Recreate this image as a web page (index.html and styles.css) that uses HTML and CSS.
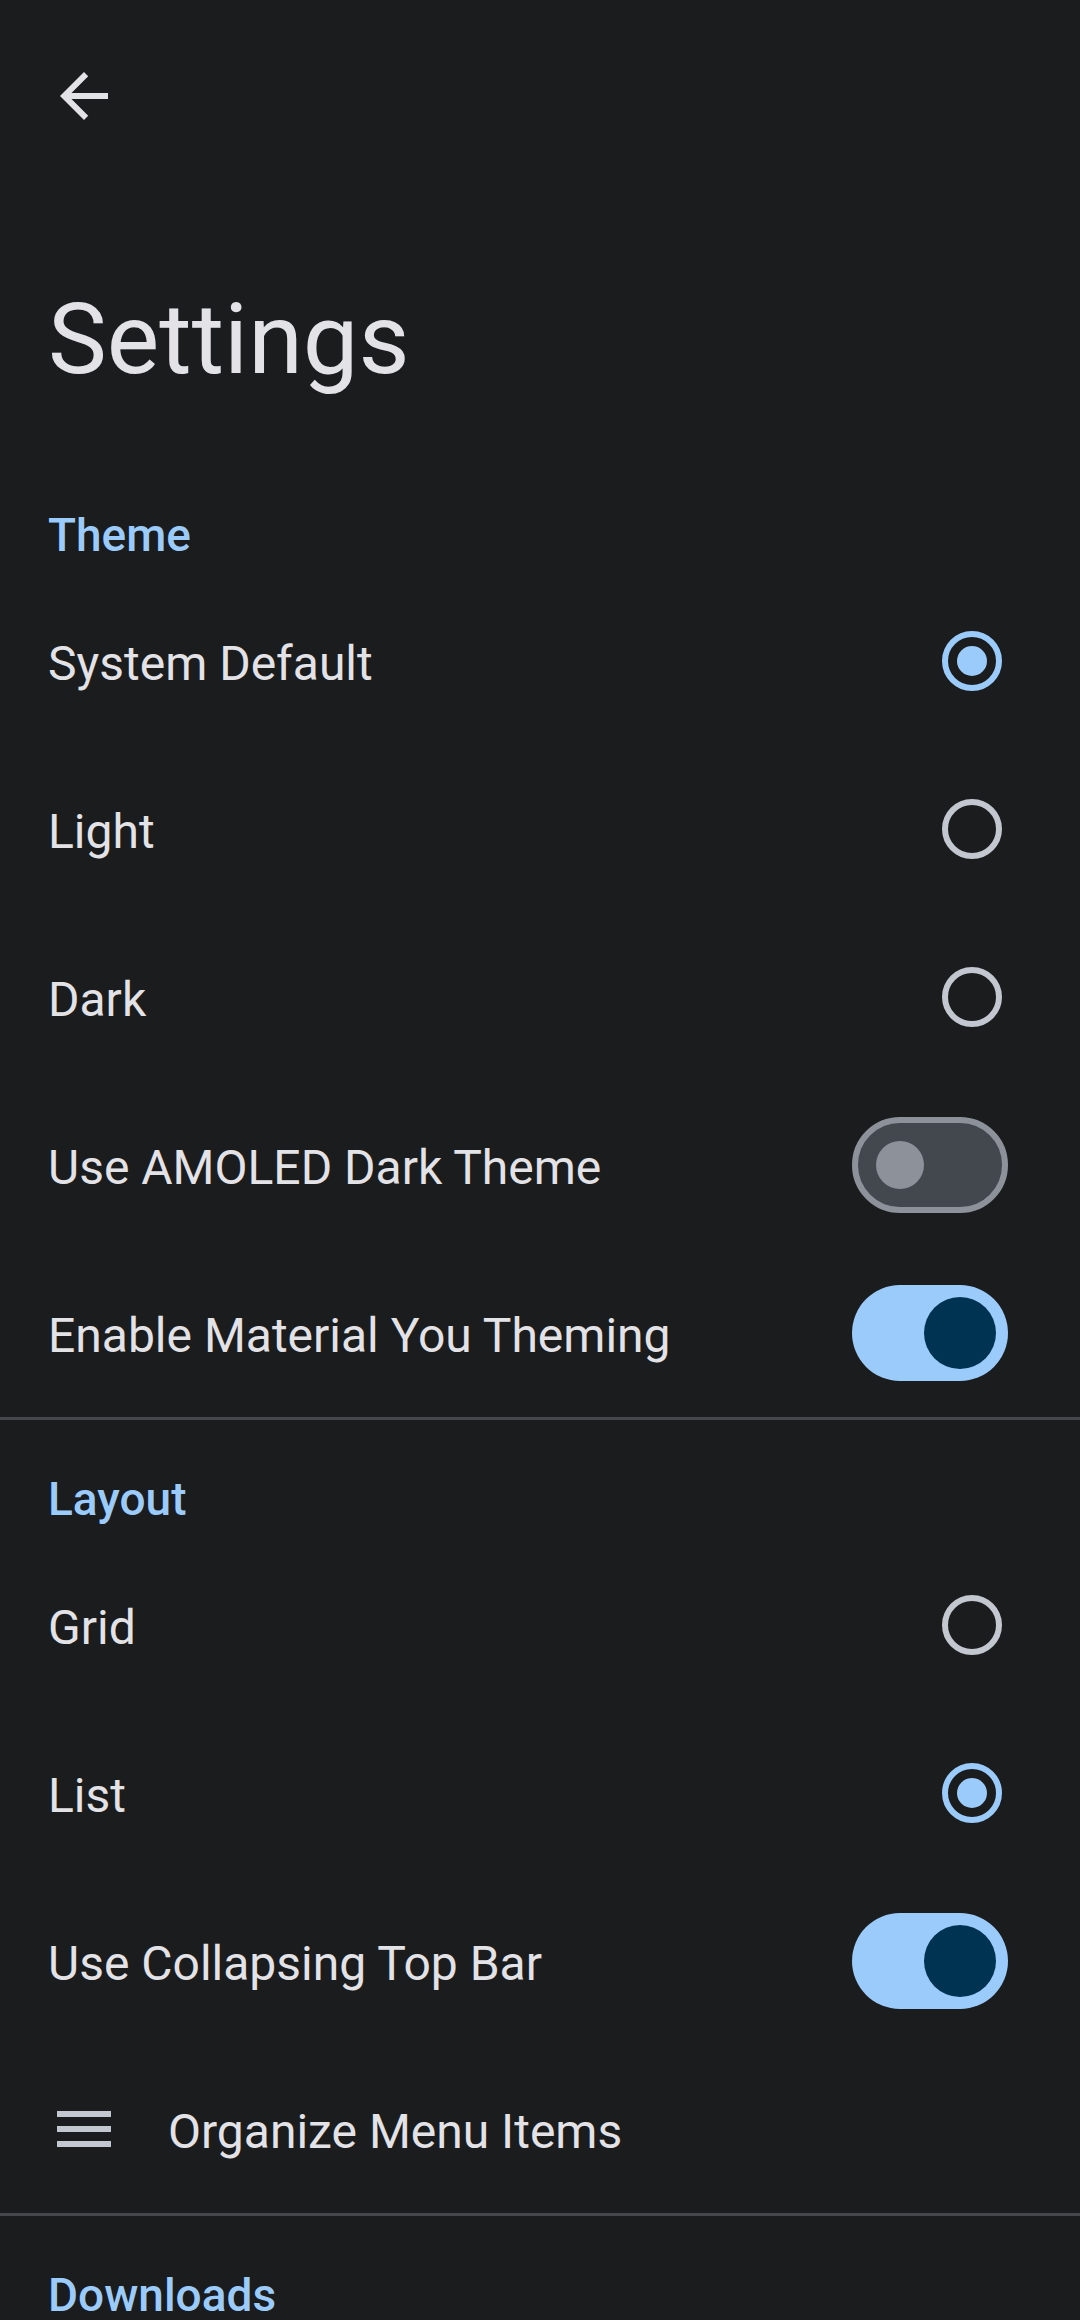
FILE: index.html
```html
<!DOCTYPE html>
<html lang="en">
<head>
<meta charset="utf-8">
<title>Settings</title>
<link rel="stylesheet" href="styles.css">
</head>
<body>
<div class="page">
  <header class="topbar">
    <svg class="nav-icon" viewBox="0 0 24 24" width="72" height="72"><path fill="#E3E2E6" d="M20 11H7.83l5.59-5.59L12 4l-8 8 8 8 1.41-1.41L7.83 13H20v-2z"/></svg>
  </header>
  <h1 class="title">Settings</h1>

  <section class="section">
    <div class="section-label">Theme</div>
    <div class="row"><span class="row-text">System Default</span><span class="ctl"><span class="radio on"><span class="dot"></span></span></span></div>
    <div class="row"><span class="row-text">Light</span><span class="ctl"><span class="radio"></span></span></div>
    <div class="row"><span class="row-text">Dark</span><span class="ctl"><span class="radio"></span></span></div>
    <div class="row"><span class="row-text">Use AMOLED Dark Theme</span><span class="switch"><span class="thumb"></span></span></div>
    <div class="row"><span class="row-text">Enable Material You Theming</span><span class="switch on"><span class="thumb"></span></span></div>
  </section>
  <div class="divider"></div>

  <section class="section">
    <div class="section-label">Layout</div>
    <div class="row"><span class="row-text">Grid</span><span class="ctl"><span class="radio"></span></span></div>
    <div class="row"><span class="row-text">List</span><span class="ctl"><span class="radio on"><span class="dot"></span></span></span></div>
    <div class="row"><span class="row-text">Use Collapsing Top Bar</span><span class="switch on"><span class="thumb"></span></span></div>
    <div class="row icon-row"><svg class="lead-icon" viewBox="0 0 24 24" width="72" height="72"><path fill="#C3C7CF" d="M3 18h18v-2H3v2zm0-5h18v-2H3v2zm0-7v2h18V6H3z"/></svg><span class="row-text">Organize Menu Items</span></div>
  </section>
  <div class="divider"></div>

  <section class="section">
    <div class="section-label">Downloads</div>
  </section>
</div>
</body>
</html>
```
FILE: styles.css
```css
html, body {
  margin: 0;
  padding: 0;
  background: #1B1C1E;
  overflow: hidden;
}
body {
  font-family: Roboto, "Noto Sans", "Liberation Sans", sans-serif;
  color: #E3E2E6;
}
.page {
  width: 1080px;
  height: 2320px;
  overflow: hidden;
}
.topbar {
  height: 192px;
  padding-left: 48px;
  display: flex;
  align-items: center;
}
.nav-icon { display: block; }
.title {
  margin: 0;
  height: 264px;
  box-sizing: border-box;
  padding: 89px 48px 0;
  font-size: 99px;
  line-height: 116px;
  font-weight: 400;
}
.section-label {
  padding: 52px 48px 14px;
  font-size: 46px;
  line-height: 55px;
  font-weight: 500;
  color: #9BCBFB;
}
.row {
  height: 168px;
  box-sizing: border-box;
  padding: 0 72px 0 48px;
  display: flex;
  align-items: center;
  justify-content: space-between;
}
.row-text {
  font-size: 48px;
  padding-top: 4px;
}
.icon-row {
  justify-content: flex-start;
  gap: 48px;
}
.lead-icon { display: block; }
.ctl {
  width: 72px;
  display: flex;
  justify-content: center;
}
.radio {
  width: 60px;
  height: 60px;
  box-sizing: border-box;
  border: 6px solid #C3C7CF;
  border-radius: 50%;
  display: flex;
  align-items: center;
  justify-content: center;
}
.radio.on { border-color: #9BCBFB; }
.dot {
  width: 30px;
  height: 30px;
  border-radius: 50%;
  background: #9BCBFB;
}
.switch {
  width: 156px;
  height: 96px;
  box-sizing: border-box;
  border-radius: 48px;
  border: 6px solid #8D9199;
  background: #43474E;
  display: flex;
  align-items: center;
  padding-left: 18px;
}
.switch .thumb {
  width: 48px;
  height: 48px;
  border-radius: 50%;
  background: #8D9199;
}
.switch.on {
  border: none;
  background: #9BCBFB;
  padding: 0 12px 0 0;
  justify-content: flex-end;
}
.switch.on .thumb {
  width: 72px;
  height: 72px;
  background: #003352;
}
.divider {
  height: 3px;
  background: #47464F;
}
```
